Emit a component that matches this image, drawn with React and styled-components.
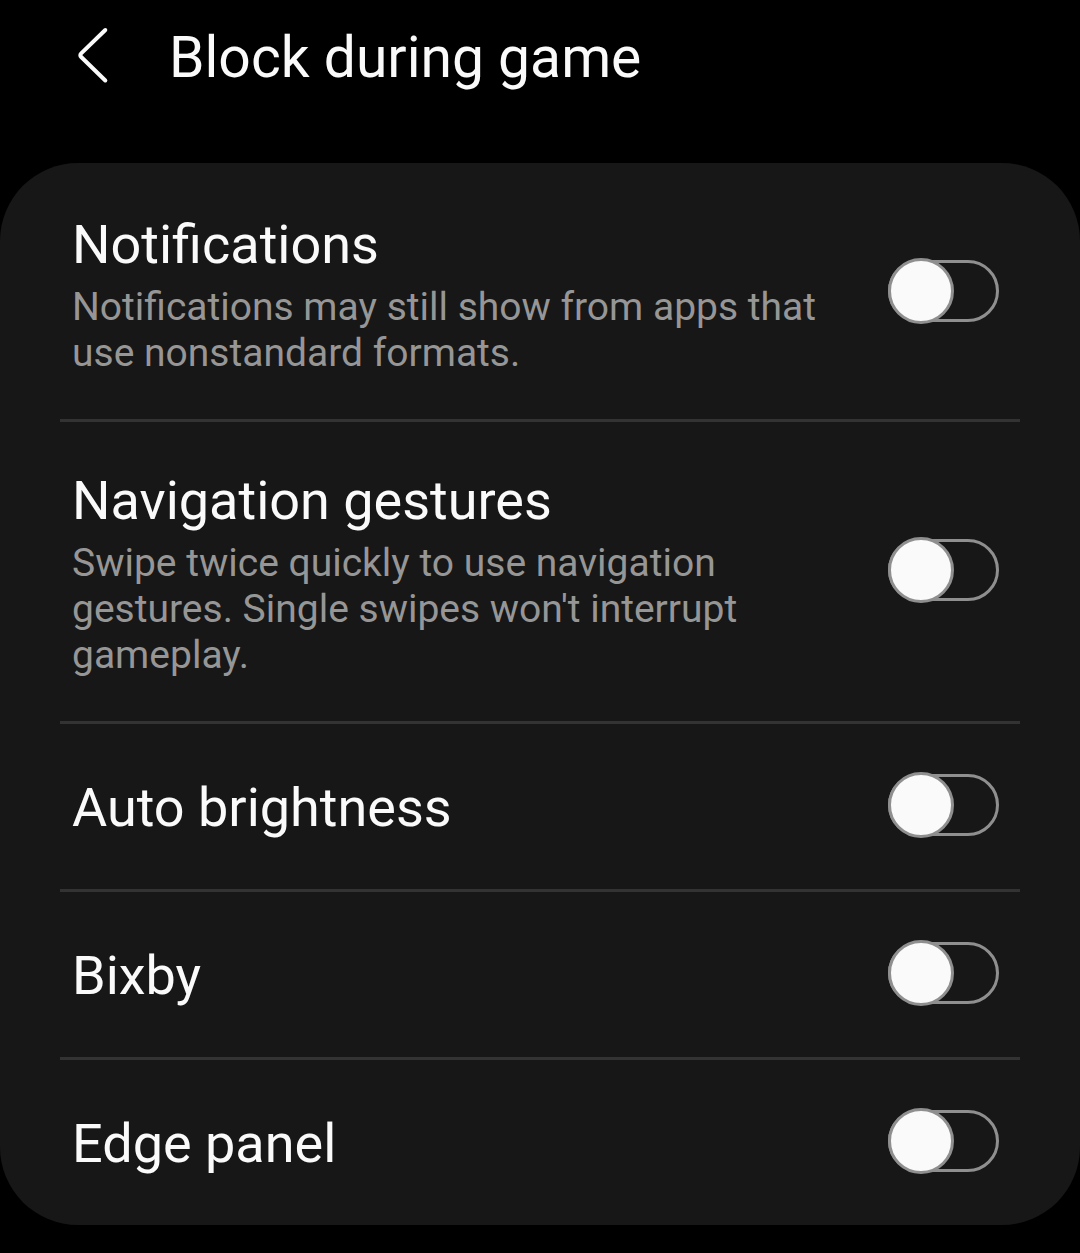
import React, { useId, useState } from "react";
import styled, { createGlobalStyle } from "styled-components";

const GlobalStyle = createGlobalStyle`
  *, *::before, *::after { box-sizing: border-box; }
  body { margin: 0; background: #000; color: #fafafa; font-family: Roboto, "Liberation Sans", sans-serif; }
`;

const Page = styled.div`
  min-height: 100vh;
  padding-bottom: 28px;
  background: #000;
`;

const Header = styled.header`
  display: flex;
  align-items: center;
  gap: 48px;
  padding: 25px 60px 72px 65px;
`;

const BackButton = styled.button`
  display: flex;
  flex: none;
  padding: 0;
  border: 0;
  background: none;
  color: #fafafa;
  cursor: pointer;
`;

const Title = styled.h1`
  margin: 0;
  font-size: 57px;
  line-height: 66px;
  font-weight: 400;
`;

const Card = styled.main`
  padding: 0 60px;
  border-radius: 78px;
  background: #171717;
`;

const Row = styled.div`
  display: flex;
  align-items: center;
  justify-content: space-between;
  gap: 60px;
  min-height: 168px;
  padding: 0 21px 0 12px;

  & + & { box-shadow: inset 0 3px #333; }
`;

const Copy = styled.div`
  display: flex;
  flex: 1;
  flex-direction: column;
  gap: 6px;
  min-width: 0;
  padding: 49px 0 43px;
`;

const Label = styled.label`
  font-size: 54px;
  line-height: 66px;
`;

const Description = styled.p`
  margin: 0;
  color: #969696;
  font-size: 39px;
  line-height: 46px;
`;

const Switch = styled.input`
  appearance: none;
  display: flex;
  align-items: center;
  flex: none;
  width: 111px;
  height: 62px;
  margin: 0;
  border: 3px solid #8f8f8f;
  border-radius: 31px;
  cursor: pointer;

  &::before {
    content: "";
    flex: none;
    width: 66px;
    height: 66px;
    margin: 0 -3px;
    border: 3px solid #8f8f8f;
    border-radius: 50%;
    background: #fafafa;
  }

  &:checked { justify-content: flex-end; background: #3e7bea; }
`;

const settings = [
  { label: "Notifications", description: "Notifications may still show from apps that use nonstandard formats." },
  { label: "Navigation gestures", description: "Swipe twice quickly to use navigation gestures. Single swipes won't interrupt gameplay." },
  { label: "Auto brightness" },
  { label: "Bixby" },
  { label: "Edge panel" },
];

function Setting({ label, description }) {
  const id = useId();
  const [on, setOn] = useState(false);
  return (
    <Row>
      <Copy>
        <Label htmlFor={id}>{label}</Label>
        {description && <Description id={id + "-text"}>{description}</Description>}
      </Copy>
      <Switch
        id={id}
        type="checkbox"
        role="switch"
        aria-describedby={description ? id + "-text" : undefined}
        checked={on}
        onChange={(event) => setOn(event.target.checked)}
      />
    </Row>
  );
}

export default function App() {
  return (
    <Page>
      <GlobalStyle />
      <Header>
        <BackButton type="button" aria-label="Back">
          <svg width="56" height="64" viewBox="0 0 56 64" fill="none" stroke="currentColor" strokeWidth="4" strokeLinecap="round" strokeLinejoin="round">
            <path d="M40.3 4L16.2 27.4Q14.4 29.2 16.2 31L40.3 54.5" />
          </svg>
        </BackButton>
        <Title>Block during game</Title>
      </Header>
      <Card>
        {settings.map((setting) => <Setting key={setting.label} {...setting} />)}
      </Card>
    </Page>
  );
}
